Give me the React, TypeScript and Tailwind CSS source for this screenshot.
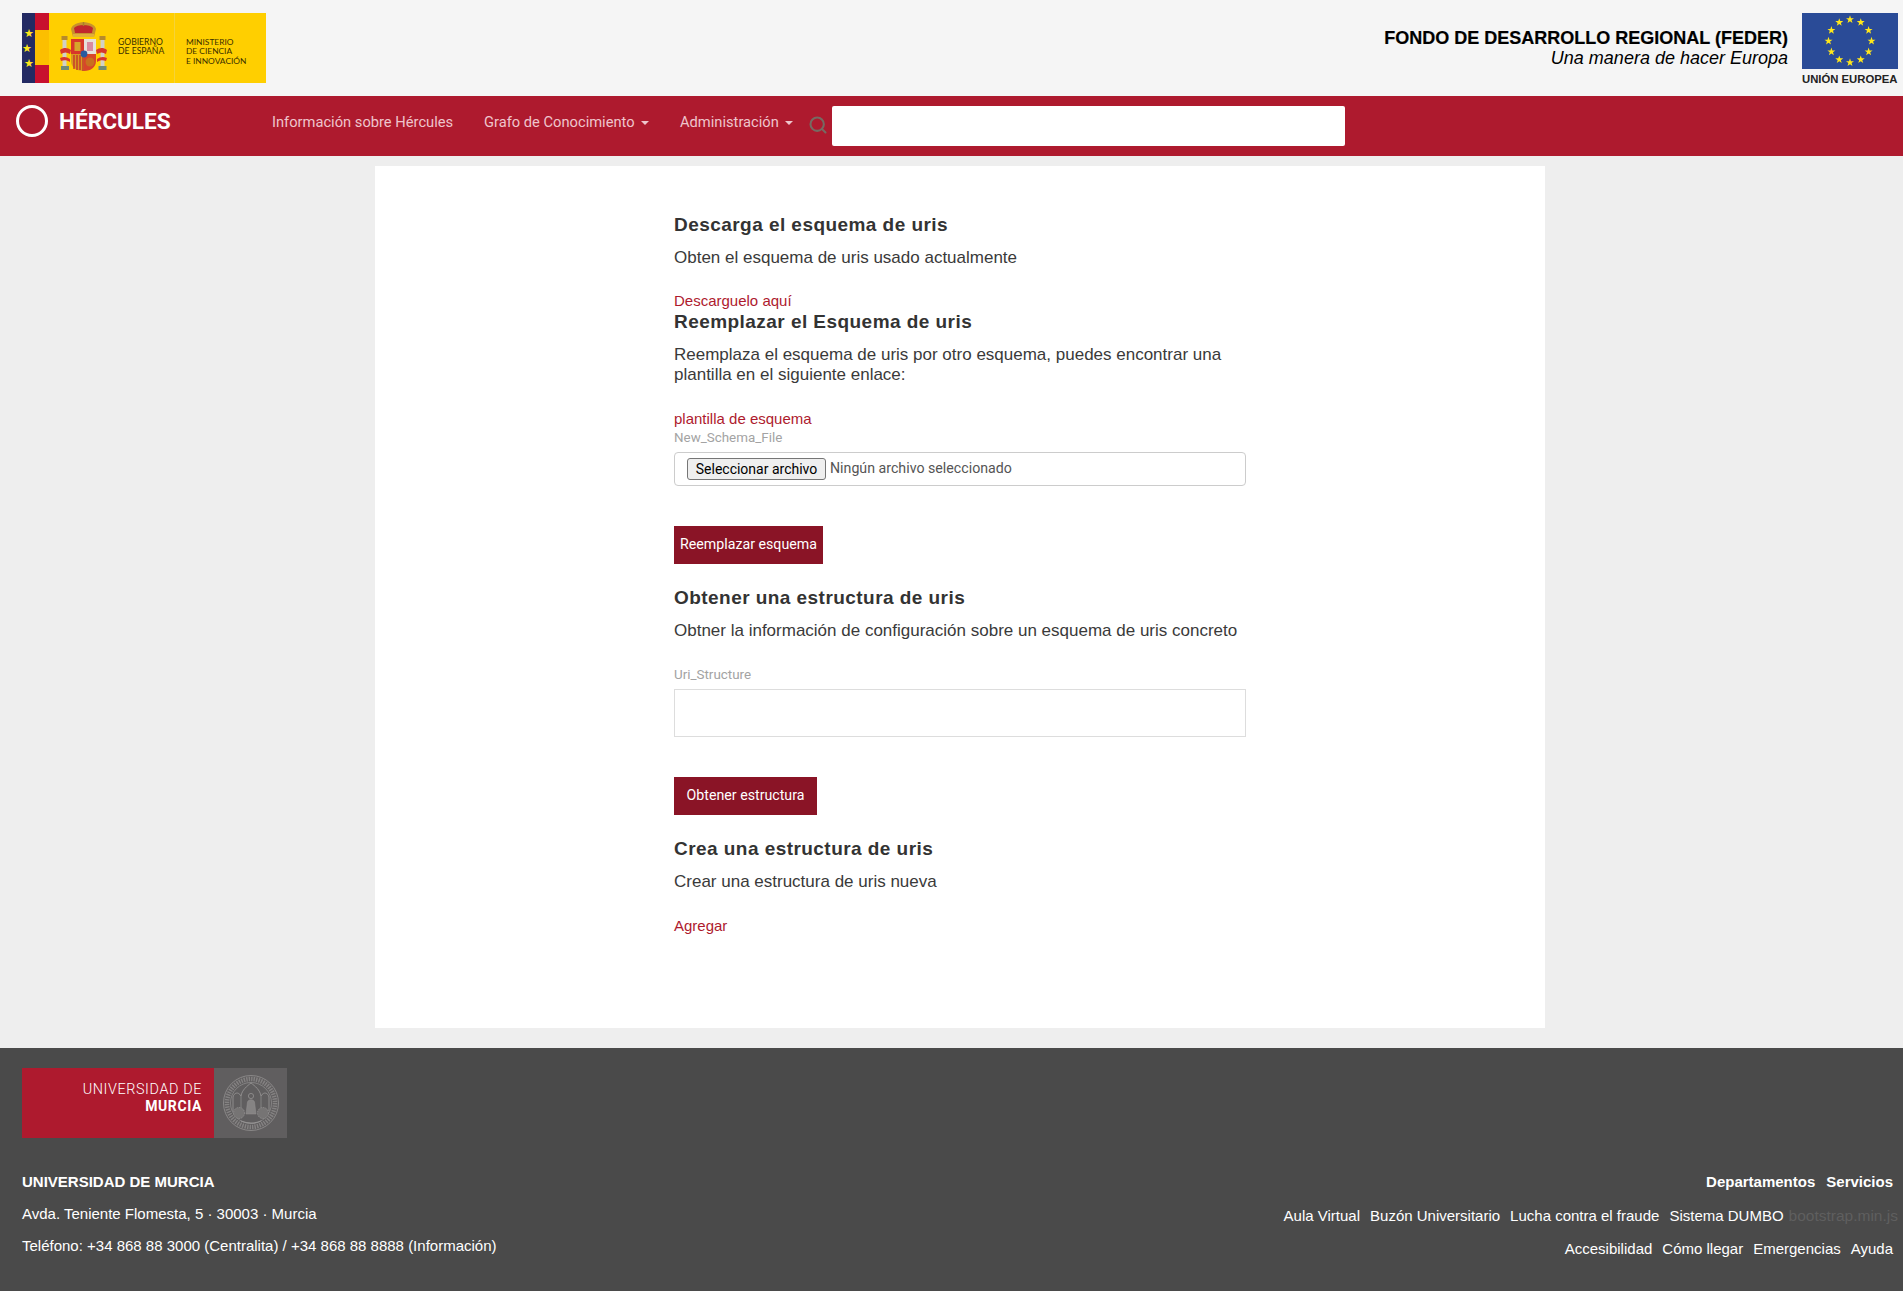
import { Search } from 'lucide-react'

const RED = '#ae1a2e'

function starPoints(cx: number, cy: number, r: number) {
  const pts: string[] = []
  for (let i = 0; i < 10; i++) {
    const rad = i % 2 === 0 ? r : r * 0.4
    const a = -Math.PI / 2 + (i * Math.PI) / 5
    pts.push(`${(cx + rad * Math.cos(a)).toFixed(2)},${(cy + rad * Math.sin(a)).toFixed(2)}`)
  }
  return pts.join(' ')
}

function EuFlag() {
  const stars = Array.from({ length: 12 }, (_, i) => {
    const a = (i * Math.PI) / 6
    return [48 + 21.5 * Math.sin(a), 28 - 21.5 * Math.cos(a)]
  })
  return (
    <svg width="96" height="56" viewBox="0 0 96 56" className="block">
      <rect width="96" height="56" fill="#2a4b97" />
      {stars.map(([x, y], i) => (
        <polygon key={i} points={starPoints(x, y, 4.2)} fill="#ffe71a" />
      ))}
    </svg>
  )
}

function CoatOfArms() {
  return (
    <svg width="48" height="50" viewBox="0 0 48 50" className="block">
      <rect x="2.5" y="17" width="4" height="28" fill="#d2d0c6" />
      <rect x="40.5" y="17" width="4" height="28" fill="#d2d0c6" />
      <rect x="1.5" y="14" width="6" height="4" fill="#b58a2c" />
      <rect x="39.5" y="14" width="6" height="4" fill="#b58a2c" />
      <rect x="1" y="44" width="8" height="4" fill="#6f8a76" />
      <rect x="38.5" y="44" width="8" height="4" fill="#6f8a76" />
      <path d="M0 28c4-3 8-2 11 0l-1 4c-3-2-6-2-9 0zM47 28c-4-3-8-2-11 0l1 4c3-2 6-2 9 0z" fill="#d8362a" />
      <path d="M0 36c4-2 7-1 10 1v3c-3-2-6-2-9-1zM47 36c-4-2-7-1-10 1v3c3-2 6-2 9-1z" fill="#d8362a" />
      <path d="M11 7c2-9 23-9 25 0l-2 8H13z" fill="#c8922c" />
      <path d="M14 6c3-4 16-4 19 0l-1 5H15z" fill="#c1272d" />
      <rect x="13" y="12" width="21" height="3" fill="#e0b03a" />
      <rect x="22.75" y="0" width="1.5" height="4" fill="#a8802a" />
      <path d="M11 17h13v15H11z" fill="#d8362a" />
      <path d="M24 17h12v15H24z" fill="#e6e0dc" />
      <path d="M11 32h13v17c-8 0-13-4-13-10z" fill="#d99a1f" />
      <path d="M24 32h12v7c0 6-5 10-12 10z" fill="#d8452a" />
      <rect x="14.5" y="20" width="6" height="9" fill="#d6a52a" />
      <path d="M27 20h6v9h-6z" fill="#d98aa0" />
      <path d="M14 33v14M17 33v15M20 33v15M23 33v16" stroke="#c1272d" strokeWidth="1.2" />
      <circle cx="30" cy="40" r="4.5" fill="#c9701f" />
      <circle cx="24" cy="32" r="3.4" fill="#2a5aa0" />
    </svg>
  )
}

function GovLogo() {
  return (
    <div className="flex h-[70px] w-[244px]">
      <div className="flex w-[13px] flex-col items-center justify-center gap-[1px] bg-[#232a63] text-[11px] leading-[14px] text-[#ffe71a]">
        <span className="ml-[1px]">★</span>
        <span className="-ml-[4px]">★</span>
        <span className="ml-[1px]">★</span>
      </div>
      <div className="flex w-[14px] flex-col">
        <div className="h-[17px] bg-[#c8102e]" />
        <div className="h-[35px] bg-[#fcbf00]" />
        <div className="h-[18px] bg-[#c8102e]" />
      </div>
      <div className="flex flex-1 items-center bg-[#ffcf00] font-['Lato',sans-serif] text-[#3b3000]">
        <div className="ml-[11px] mt-[-2px] w-[48px]">
          <CoatOfArms />
        </div>
        <div className="ml-[10px] mb-[2px] w-[56px] text-[8.6px] leading-[9.5px]">
          <div>GOBIERNO</div>
          <div>DE ESPAÑA</div>
        </div>
        <div className="h-full w-px bg-[#f5d33a]" />
        <div className="ml-[11px] mt-[8px] text-[8.4px] leading-[9.5px]">
          <div>MINISTERIO</div>
          <div>DE CIENCIA</div>
          <div>E INNOVACIÓN</div>
        </div>
      </div>
    </div>
  )
}

function TopBar() {
  return (
    <header className="flex h-[96px] items-start justify-between bg-[#f5f5f5] pl-[22px] pr-[5px] pt-[13px] font-['Liberation_Sans',sans-serif] text-black">
      <GovLogo />
      <div className="flex">
        <div className="mr-[14px] mt-[15px] text-right">
          <div className="text-[18px] font-bold leading-[20px] [-webkit-text-stroke:0.2px_black]">FONDO DE DESARROLLO REGIONAL (FEDER)</div>
          <div className="text-[18px] italic leading-[20px]">Una manera de hacer Europa</div>
        </div>
        <div className="w-[96px]">
          <EuFlag />
          <div className="mt-[3px] whitespace-nowrap text-[11.3px] font-bold leading-[14px] text-[#222]">UNIÓN EUROPEA</div>
        </div>
      </div>
    </header>
  )
}

function Caret() {
  return <span className="ml-[6px] inline-block translate-y-[-2px] border-x-[4px] border-t-[4px] border-x-transparent border-t-[#eec5cc]" />
}

function NavBar() {
  return (
    <nav className="flex h-[60px] items-start font-['Roboto',sans-serif]" style={{ backgroundColor: RED }}>
      <div className="ml-[16px] mt-[9px] size-[32px] rounded-full border-[3px] border-white" />
      <span className="ml-[11px] mt-[13px] w-[213px] text-[22.6px] font-bold leading-[26px] text-white">HÉRCULES</span>
      <div className="mt-[16px] flex text-[14.7px] leading-[20px] text-[#eec5cc]">
        <span className="w-[212px]">Información sobre Hércules</span>
        <span className="w-[196px]">Grafo de Conocimiento<Caret /></span>
        <span className="w-[131px]">Administración<Caret /></span>
      </div>
      <Search size={20} strokeWidth={2.5} className="ml-[-3px] mt-[19px] text-[#766a62]" />
      <div className="ml-[4px] mt-[10px] h-[40px] w-[513px] rounded-[2px] bg-white" />
    </nav>
  )
}

function Heading({ children }: { children: string }) {
  return <h2 className="text-[19px] font-bold leading-[22px] tracking-[0.45px] text-[#333]">{children}</h2>
}

function Text({ children }: { children: string }) {
  return <p className="text-[17px] leading-[20px] text-[#3a3a3a]">{children}</p>
}

function TextLink({ children }: { children: string }) {
  return <a className="block text-[15px] leading-[20px] text-[#ae1a2e]">{children}</a>
}

function Label({ children }: { children: string }) {
  return <div className="font-['Roboto',sans-serif] text-[13.4px] leading-[18px] text-[#a3a3a3]">{children}</div>
}

function Main() {
  return (
    <main className="flex h-[892px] justify-center bg-[#eeeeee] pl-[17px] pt-[10px]">
      <div className="h-[862px] w-[1170px] bg-white pl-[299px] pt-[48px] font-['Liberation_Sans',sans-serif]">
        <div className="w-[572px]">
          <Heading>Descarga el esquema de uris</Heading>
          <div className="mt-[12px]"><Text>Obten el esquema de uris usado actualmente</Text></div>
          <div className="mt-[23px]"><TextLink>Descarguelo aquí</TextLink></div>
          <Heading>Reemplazar el Esquema de uris</Heading>
          <div className="mt-[12px]"><Text>Reemplaza el esquema de uris por otro esquema, puedes encontrar una plantilla en el siguiente enlace:</Text></div>
          <div className="mt-[24px]"><TextLink>plantilla de esquema</TextLink></div>
          <Label>New_Schema_File</Label>
          <div className="mt-[5px] flex h-[34px] items-center rounded-[4px] border border-[#cccccc] pl-[12px] font-['Roboto',sans-serif] text-[14.2px] text-[#555]">
            <button className="h-[22px] w-[139px] rounded-[3px] border border-[#767676] bg-[#efefef] text-[14px] leading-[18px] text-black">Seleccionar archivo</button>
            <span className="ml-[4px]">Ningún archivo seleccionado</span>
          </div>
          <button className="mt-[40px] block h-[38px] w-[149px] bg-[#8a1426] font-['Roboto',sans-serif] text-[14.2px] text-white">Reemplazar esquema</button>
          <div className="mt-[23px]"><Heading>Obtener una estructura de uris</Heading></div>
          <div className="mt-[12px]"><Text>Obtner la información de configuración sobre un esquema de uris concreto</Text></div>
          <div className="mt-[25px]"><Label>Uri_Structure</Label></div>
          <div className="mt-[5px] h-[48px] border border-[#dddddd]" />
          <button className="mt-[40px] block h-[38px] w-[143px] bg-[#8a1426] font-['Roboto',sans-serif] text-[14.2px] text-white">Obtener estructura</button>
          <div className="mt-[23px]"><Heading>Crea una estructura de uris</Heading></div>
          <div className="mt-[12px]"><Text>Crear una estructura de uris nueva</Text></div>
          <div className="mt-[24px]"><TextLink>Agregar</TextLink></div>
        </div>
      </div>
    </main>
  )
}

function Seal() {
  return (
    <svg width="58" height="58" viewBox="0 0 58 58" fill="none" stroke="#949292" className="block">
      <circle cx="29" cy="29" r="27.5" strokeWidth="0.8" />
      <circle cx="29" cy="29" r="20.5" strokeWidth="0.7" />
      <circle cx="29" cy="29" r="24" strokeWidth="4.5" strokeDasharray="1.4 1.1" opacity="0.7" />
      <path d="M11 37V23c1-4 5-6 8-1 1-6 6-10 10-13 4 3 9 7 10 13 3-5 7-3 8 1v14" strokeWidth="0.9" />
      <path d="M19 22v12M39 22v12" strokeWidth="0.7" />
      <path d="M24 40l1.5-12c1-3 6-3 7 0L34 40z" fill="#858383" strokeWidth="0.5" />
      <circle cx="29" cy="22" r="2.6" strokeWidth="0.8" />
      <circle cx="17" cy="39" r="5.5" strokeWidth="1" strokeDasharray="1 0.8" fill="#767474" />
      <circle cx="41" cy="39" r="5.5" strokeWidth="1" strokeDasharray="1 0.8" fill="#767474" />
      <path d="M19 47c6 2.5 14 2.5 20 0" strokeWidth="1.2" />
    </svg>
  )
}

function MurciaLogo() {
  return (
    <div className="flex h-[70px] w-[265px]">
      <div className="w-[192px] pr-[12px] pt-[13px] text-right font-['Roboto',sans-serif] text-white" style={{ backgroundColor: RED }}>
        <div className="text-[14.4px] font-light leading-[17px] tracking-[0.6px] text-white">UNIVERSIDAD DE</div>
        <div className="text-[14px] font-bold leading-[16px] tracking-[0.6px]">MURCIA</div>
      </div>
      <div className="flex flex-1 items-center justify-center bg-[#605e5f]">
        <Seal />
      </div>
    </div>
  )
}

function Footer() {
  return (
    <footer className="h-[243px] bg-[#4a4a4a] pl-[22px] pr-[10px] pt-[20px] font-['Liberation_Sans',sans-serif] text-[15px] text-white">
      <MurciaLogo />
      <div className="mt-[28px] flex items-start justify-between leading-[32px]">
        <div>
          <div className="font-bold">UNIVERSIDAD DE MURCIA</div>
          <div>Avda. Teniente Flomesta, 5 · 30003 · Murcia</div>
          <div>Teléfono: +34 868 88 3000 (Centralita) / +34 868 88 8888 (Información)</div>
        </div>
        <div className="flex flex-col items-end">
          <div className="flex gap-[11px] font-bold">
            <span>Departamentos</span>
            <span>Servicios</span>
          </div>
          <div className="-mr-[5px] mt-[2px] flex gap-[10px]">
            <span>Aula Virtual</span>
            <span>Buzón Universitario</span>
            <span>Lucha contra el fraude</span>
            <span>Sistema DUMBO</span>
            <span className="-ml-[5px] text-[15.5px] text-[#5f5f5f]">bootstrap.min.js</span>
          </div>
          <div className="mt-[1px] flex gap-[10px]">
            <span>Accesibilidad</span>
            <span>Cómo llegar</span>
            <span>Emergencias</span>
            <span>Ayuda</span>
          </div>
        </div>
      </div>
    </footer>
  )
}

export default function App() {
  return (
    <div>
      <TopBar />
      <NavBar />
      <Main />
      <Footer />
    </div>
  )
}
